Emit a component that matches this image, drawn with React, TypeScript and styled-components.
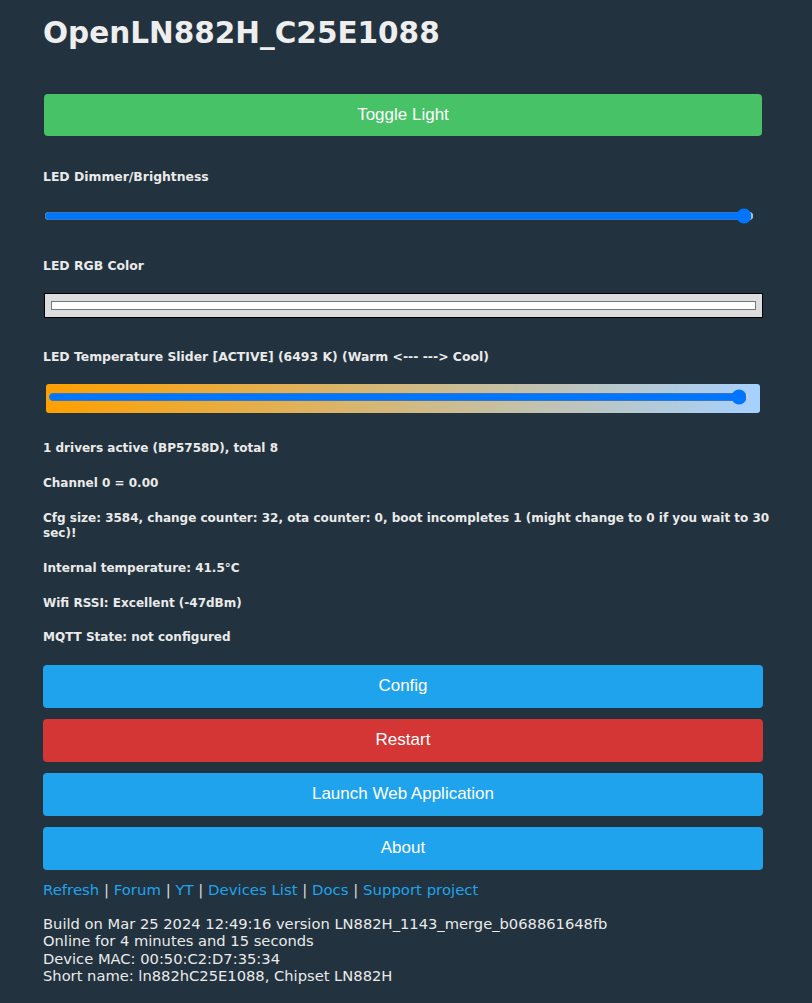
import { FC } from "react"
import styled, { createGlobalStyle } from "styled-components"

const GlobalStyle = createGlobalStyle`
  body {
    margin: 0;
    background: #22333f;
    color: #eaeaea;
    font-family: "DejaVu Sans", Verdana, sans-serif;
  }
`

const Page = styled.div`
  width: 720px;
  padding: 0 0 12px 43px;
`
const Title = styled.h1`
  margin: 16px 0 43px;
  font-size: 29.5px;
  line-height: 35px;
  font-weight: bold;
  color: #eeeeee;
  white-space: nowrap;
`
const Button = styled.button<{ $tone: "green" | "blue" | "red"; $narrow?: boolean }>`
  display: block;
  width: ${p => (p.$narrow ? "718px" : "720px")};
  height: ${p => (p.$narrow ? "42px" : "43px")};
  margin: ${p => (p.$narrow ? "0 0 0 1px" : "0")};
  border: 0;
  border-radius: 4px;
  background: ${p => (p.$tone === "green" ? "#47c266" : p.$tone === "red" ? "#d43535" : "#1fa3ec")};
  color: #fff;
  font-family: "Liberation Sans", Arial, sans-serif;
  font-size: 17px;
  cursor: pointer;
`
const ButtonStack = styled.div`
  display: flex;
  flex-direction: column;
  gap: 11px;
  margin-top: 19px;
`
const Label = styled.div<{ $top: number }>`
  margin-top: ${p => p.$top}px;
  font-size: 12.4px;
  line-height: 16px;
  font-weight: bold;
  white-space: nowrap;
`
const Range = styled.input`
  display: block;
  width: 710px;
  height: 16px;
  margin: 23px 0 0 1px;
  padding: 0;
`
const ColorPick = styled.input`
  display: block;
  width: 719px;
  height: 25px;
  margin: 19px 0 0 1px;
  padding: 7px 6px;
  box-sizing: border-box;
  background: #dddddd;
  border: 1px solid #000;
  -webkit-appearance: none;
  appearance: none;
  &::-webkit-color-swatch-wrapper {
    padding: 0;
  }
  &::-webkit-color-swatch {
    border: 1px solid #777;
    border-radius: 0;
  }
`
const TempBox = styled.div`
  display: flex;
  align-items: center;
  width: 714px;
  height: 29px;
  margin: 19px 0 0 3px;
  padding: 0 10px 3px 2px;
  box-sizing: border-box;
  border-radius: 3px;
  background: linear-gradient(to right, #ffa000, #a6d1ff);
`
const TempRange = styled.input`
  flex: 1;
  height: 16px;
  margin: 0;
  padding: 0;
`
const InfoList = styled.div`
  width: 740px;
  margin-top: 28px;
  display: flex;
  flex-direction: column;
  gap: 19.3px;
`
const Info = styled.p`
  margin: 0;
  font-size: 12px;
  line-height: 15.5px;
  font-weight: bold;
`
const Links = styled.div`
  margin-top: 11px;
  font-size: 14.9px;
  line-height: 18px;
  color: #dddddd;
`
const Link = styled.a`
  color: #1fa3ec;
  text-decoration: none;
`
const Footer = styled.div`
  margin-top: 16px;
  font-size: 14.7px;
  line-height: 17.4px;
  color: #eaeaea;
`

const links = ["Refresh", "Forum", "YT", "Devices List", "Docs", "Support project"]

const info = [
  "1 drivers active (BP5758D), total 8",
  "Channel 0 = 0.00",
  "Cfg size: 3584, change counter: 32, ota counter: 0, boot incompletes 1 (might change to 0 if you wait to 30 sec)!",
  "Internal temperature: 41.5°C",
  "Wifi RSSI: Excellent (-47dBm)",
  "MQTT State: not configured",
]

const App: FC = () => {
  return (
    <Page>
      <GlobalStyle />
      <Title>OpenLN882H_C25E1088</Title>
      <Button $tone="green" $narrow>Toggle Light</Button>

      <Label $top={33}>LED Dimmer/Brightness</Label>
      <Range type="range" min={0} max={100} step="any" defaultValue={99.7} />

      <Label $top={34}>LED RGB Color</Label>
      <ColorPick type="color" defaultValue="#ffffff" />

      <Label $top={31}>LED Temperature Slider [ACTIVE] (6493 K) (Warm &lt;--- ---&gt; Cool)</Label>
      <TempBox>
        <TempRange type="range" min={0} max={100} step="any" defaultValue={99.6} />
      </TempBox>

      <InfoList>
        {info.map((line, i) => (
          <Info key={i}>{line}</Info>
        ))}
      </InfoList>

      <ButtonStack>
        <Button $tone="blue">Config</Button>
        <Button $tone="red">Restart</Button>
        <Button $tone="blue">Launch Web Application</Button>
        <Button $tone="blue">About</Button>
      </ButtonStack>

      <Links>
        {links.map((l, i) => (
          <span key={l}>
            {i > 0 && " | "}
            <Link href="#">{l}</Link>
          </span>
        ))}
      </Links>

      <Footer>
        Build on Mar 25 2024 12:49:16 version LN882H_1143_merge_b068861648fb<br />
        Online for 4 minutes and 15 seconds<br />
        Device MAC: 00:50:C2:D7:35:34<br />
        Short name: ln882hC25E1088, Chipset LN882H
      </Footer>
    </Page>
  )
}

export default App
